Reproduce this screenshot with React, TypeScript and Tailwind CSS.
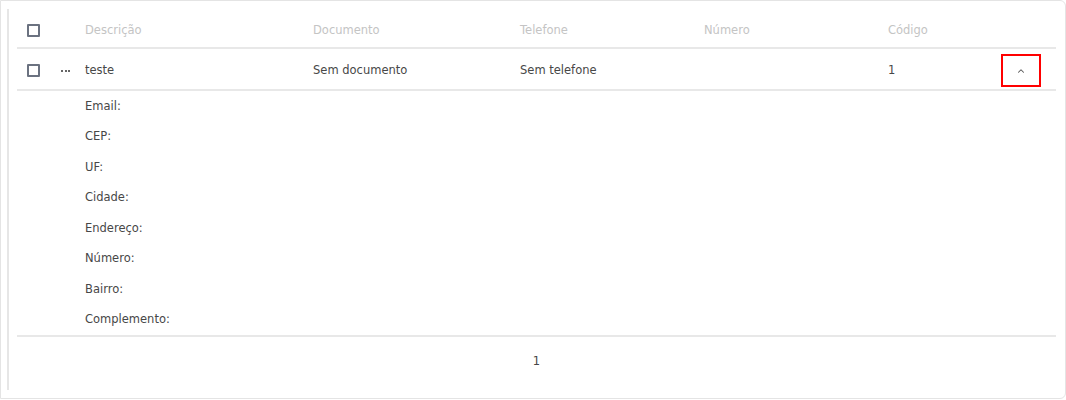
import { ChevronUp } from 'lucide-react'

const cols = 'grid grid-cols-[33px_35px_228px_207px_184px_184px_1fr_64px] items-center'

const detalhes = ['Email:', 'CEP:', 'UF:', 'Cidade:', 'Endereço:', 'Número:', 'Bairro:', 'Complemento:']

function Checkbox() {
  return <span className="block w-[13px] h-[13px] border-2 border-[#6b7280] rounded-[1px] ml-[10px]" />
}

export default function App() {
  return (
    <div className="w-[1066px] h-[400px] bg-white" style={{ fontFamily: '"DejaVu Sans", sans-serif' }}>
      <div className="h-[399px] border border-[#e4e4e4] rounded-r-md flex">
        <div className="w-[6px] shrink-0" />
        <div className="w-[2px] bg-[#e6e6e6] my-[8px] shrink-0" />
        <div className="flex-1 pl-[8px] pr-[9px] pt-[13px] flex flex-col">
          <div className={`${cols} h-[35px] border-b-2 border-[#e8e8e8] text-[11.5px] text-[#c4c4c4]`}>
            <Checkbox />
            <span />
            <span>Descrição</span>
            <span>Documento</span>
            <span>Telefone</span>
            <span>Número</span>
            <span>Código</span>
            <span />
          </div>
          <div className={`${cols} h-[42px] pt-[3px] border-b-2 border-[#e8e8e8] text-[11.5px] text-[#474747]`}>
            <Checkbox />
            <span className="flex gap-[1.5px] pl-[11px]">
              <span className="w-[2px] h-[2px] rounded-full bg-[#333]" />
              <span className="w-[2px] h-[2px] rounded-full bg-[#333]" />
              <span className="w-[2px] h-[2px] rounded-full bg-[#333]" />
            </span>
            <span>teste</span>
            <span>Sem documento</span>
            <span>Sem telefone</span>
            <span />
            <span>1</span>
            <span className="flex">
              <span className="ml-[9px] w-[40px] h-[33px] border-2 border-[#ff0000] flex items-center justify-center">
                <ChevronUp className="w-[10px] h-[10px] text-[#555]" strokeWidth={2.5} />
              </span>
            </span>
          </div>
          <div className="border-b-2 border-[#e8e8e8] pl-[68px] text-[11.5px] text-[#474747]">
            {detalhes.map((d) => (
              <div key={d} className="h-[30.5px] flex items-center">
                {d}
              </div>
            ))}
          </div>
          <div className="flex justify-center pt-[16px] text-[11.5px] text-[#474747]">1</div>
        </div>
      </div>
    </div>
  )
}
